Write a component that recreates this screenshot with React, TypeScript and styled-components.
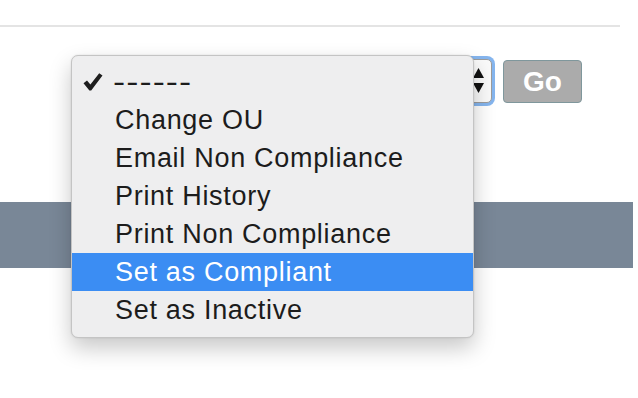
import styled, { createGlobalStyle } from "styled-components";

const GlobalStyle = createGlobalStyle`
  html, body {
    margin: 0;
    padding: 0;
    background: #ffffff;
    font-family: "Liberation Sans", Arial, sans-serif;
  }
`;

const Page = styled.div`
  position: relative;
  width: 638px;
  height: 398px;
  overflow: hidden;
  background: #fff;
`;

const TopRule = styled.div`
  width: 620px;
  height: 25px;
  border-bottom: 2px solid #e4e4e4;
`;

const ActionRow = styled.div`
  display: flex;
  align-items: flex-start;
  gap: 11px;
  padding: 30px 0 0 80px;
`;

const SelectBox = styled.div`
  width: 412px;
  height: 44px;
  margin-top: 2px;
  box-sizing: border-box;
  border: 1px solid #9c9c9c;
  border-radius: 5px;
  background: #fafafa;
  box-shadow: 0 0 0 3px rgba(92, 156, 232, 0.75);
  display: flex;
  justify-content: flex-end;
  align-items: center;
  padding-right: 7px;
`;

const GoButton = styled.button`
  width: 79px;
  height: 43px;
  margin-top: 3px;
  box-sizing: border-box;
  border: 1px solid #7f979c;
  border-radius: 4px;
  background: #ababab;
  color: #ffffff;
  font-family: "Liberation Sans", Arial, sans-serif;
  font-size: 28px;
  font-weight: bold;
  padding: 0;
`;

const Band = styled.div`
  width: 633px;
  height: 66px;
  margin-top: 99px;
  background: #798797;
`;

const Menu = styled.ul`
  position: absolute;
  left: 71px;
  top: 55px;
  width: 403px;
  box-sizing: border-box;
  margin: 0;
  padding: 7px 0 8px;
  list-style: none;
  background: #eeeeef;
  border: 1px solid #c4c4c4;
  border-radius: 7px;
  box-shadow: 0 10px 22px rgba(0, 0, 0, 0.22), 0 0 2px rgba(0, 0, 0, 0.12);
`;

const Item = styled.li<{ $active?: boolean }>`
  position: relative;
  height: 38px;
  display: flex;
  align-items: center;
  padding-left: 43px;
  font-size: 27px;
  letter-spacing: 0.7px;
  color: ${(p) => (p.$active ? "#ffffff" : "#1c1c1c")};
  background: ${(p) => (p.$active ? "#3b8df3" : "transparent")};
`;

const Check = styled.svg`
  position: absolute;
  left: 11px;
  top: 10px;
`;

const Dashes = styled.span`
  display: inline-block;
  letter-spacing: 0.8px;
  margin-left: -2px;
  transform: scaleX(1.35);
  transform-origin: left center;
`;

const options = [
  "Change OU",
  "Email Non Compliance",
  "Print History",
  "Print Non Compliance",
  "Set as Compliant",
  "Set as Inactive",
];

export default function App() {
  return (
    <Page>
      <GlobalStyle />
      <TopRule />
      <ActionRow>
        <SelectBox>
          <svg width="11" height="26" viewBox="0 0 11 26">
            <path d="M5.5 0 L11 10 L0 10 Z" fill="#111" />
            <path d="M0 15 L11 15 L5.5 25 Z" fill="#111" />
          </svg>
        </SelectBox>
        <GoButton>Go</GoButton>
      </ActionRow>
      <Band />
      <Menu>
        <Item>
          <Check width="20" height="18" viewBox="0 0 20 18">
            <path
              d="M0.5 10.2 L4 7.6 L7.4 11.6 L16.2 0.3 L19.5 2.4 L8.2 17.6 L6.4 17.6 Z"
              fill="#1e1e1e"
            />
          </Check>
          <Dashes>------</Dashes>
        </Item>
        {options.map((o) => (
          <Item key={o} $active={o === "Set as Compliant"}>
            {o}
          </Item>
        ))}
      </Menu>
    </Page>
  );
}
